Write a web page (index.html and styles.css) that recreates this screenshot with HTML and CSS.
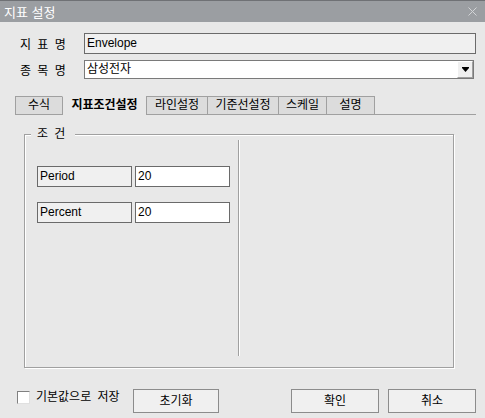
FILE: index.html
```html
<!DOCTYPE html>
<html lang="ko">
<head>
<meta charset="utf-8">
<title>지표 설정</title>
<link rel="stylesheet" href="styles.css">
</head>
<body>
<div class="window">
  <div class="titlebar">
    <span class="title">지표 설정</span>
    <svg class="close" width="9" height="9" viewBox="0 0 9 9"><path d="M0.5 0.5 L8.5 8.5 M8.5 0.5 L0.5 8.5" stroke="#d2d4d6" stroke-width="1" fill="none"/></svg>
  </div>
  <div class="main">
    <div class="row row-name">
      <span class="label">지 표 명</span>
      <div class="textbox">Envelope</div>
    </div>
    <div class="row row-item">
      <span class="label">종 목 명</span>
      <div class="combo">
        <span class="combo-text">삼성전자</span>
        <span class="combo-btn"><svg width="9" height="6" viewBox="0 0 9 6"><path d="M1 1 H8 L4.5 5 Z" fill="#000"/><rect x="1" y="0" width="7" height="1" fill="#000"/></svg></span>
      </div>
    </div>
    <div class="tabs">
      <div class="tab tab-1">수식</div>
      <div class="tab tab-2 active">지표조건설정</div>
      <div class="tab tab-3">라인설정</div>
      <div class="tab tab-4">기준선설정</div>
      <div class="tab tab-5">스케일</div>
      <div class="tab tab-6">설명</div>
    </div>
    <div class="group">
      <span class="legend">조 건</span>
      <div class="params">
        <div class="param">
          <div class="param-label">Period</div>
          <div class="param-input">20</div>
        </div>
        <div class="param">
          <div class="param-label">Percent</div>
          <div class="param-input">20</div>
        </div>
      </div>
      <div class="sep"></div>
    </div>
    <div class="footer">
      <div class="check">
        <span class="checkbox"></span>
        <span class="check-label">기본값으로 저장</span>
      </div>
      <div class="btn btn-reset">초기화</div>
      <div class="btn btn-ok">확인</div>
      <div class="btn btn-cancel">취소</div>
    </div>
  </div>
</div>
</body>
</html>
```
FILE: styles.css
```css
* { box-sizing: border-box; }
html, body { margin: 0; padding: 0; }
body {
  width: 485px;
  height: 418px;
  overflow: hidden;
  background: #e8e8e8;
  font-family: "Liberation Sans", "Noto Sans CJK KR", sans-serif;
  font-size: 12px;
  word-spacing: 3px;
  color: #000;
}
.window { width: 485px; height: 418px; }

.titlebar {
  height: 22px;
  background: #9b9ea2;
  border-top: 1px solid #6f7175;
  display: flex;
  align-items: center;
  justify-content: space-between;
  padding: 0 8px 0 4px;
  color: #fff;
  font-size: 13px;
  word-spacing: 0;
}
.close { display: block; }

.main { padding: 11px 9px 0 20px; }

.row { display: flex; align-items: center; }
.label { width: 64px; flex: none; }
.row-name { height: 21px; }
.textbox {
  flex: 1;
  height: 21px;
  border: 1px solid #6b6b6b;
  background: #f0f0f0;
  padding-left: 2px;
  line-height: 18px;
}
.row-item { height: 19px; margin-top: 6px; }
.combo {
  flex: 1;
  height: 19px;
  margin-right: 2px;
  border: 1px solid #7a7a7a;
  background: #fff;
  display: flex;
  align-items: center;
  justify-content: space-between;
  padding-left: 2px;
}
.combo-text { line-height: 17px; }
.combo-btn {
  width: 16px;
  height: 17px;
  background: #f0f0f0;
  border-top: 1px solid #fff;
  border-left: 1px solid #fff;
  border-right: 1px solid #a0a0a0;
  border-bottom: 1px solid #a0a0a0;
  display: flex;
  align-items: center;
  justify-content: center;
}
.combo-btn svg { display: block; }

.tabs {
  display: flex;
  margin: 17px 0 0 -5px;
  height: 19px;
  border-bottom: 1px solid #a0a0a0;
}
.tab {
  height: 18px;
  background: #dcdcdc;
  border-top: 1px solid #a0a0a0;
  border-left: 1px solid #a0a0a0;
  text-align: center;
  line-height: 16px;
}
.tab.active {
  background: #e8e8e8;
  border-top-color: #e8e8e8;
  height: 19px;
  margin-bottom: -1px;
  font-weight: bold;
  position: relative;
}
.tab-1 { width: 47px; }
.tab-2 { width: 84px; }
.tab-3 { width: 61px; }
.tab-4 { width: 71px; }
.tab-5 { width: 48px; }
.tab-6 { width: 49px; border-right: 1px solid #a0a0a0; }

.group {
  position: relative;
  margin: 19px 0 0 4px;
  width: 430px;
  height: 234px;
  border: 1px solid #a0a0a0;
  box-shadow: inset 1px 1px 0 #fff, 1px 1px 0 #fff;
  display: flex;
  padding: 5px 0 11px 12px;
}
.legend {
  position: absolute;
  top: -8px;
  left: 6px;
  width: 44px;
  padding-left: 6px;
  line-height: 14px;
  background: #e8e8e8;
}
.params { width: 193px; margin-right: 8px; padding-top: 26px; }
.param { display: flex; height: 21px; margin-bottom: 15px; }
.param-label {
  width: 95px;
  border: 1px solid #6a6a6a;
  background: #f0f0f0;
  padding-left: 2px;
  line-height: 18px;
}
.param-input {
  width: 95px;
  margin-left: 3px;
  border: 1px solid #6a6a6a;
  background: #fff;
  padding-left: 2px;
  line-height: 18px;
}
.sep {
  width: 2px;
  border-left: 1px solid #a0a0a0;
  border-right: 1px solid #fff;
}

.footer {
  display: flex;
  align-items: flex-start;
  margin: 21px 0 0 -3px;
  height: 24px;
}
.check {
  display: flex;
  align-items: center;
  width: 107px;
  height: 14px;
  margin-top: 1px;
  white-space: nowrap;
}
.checkbox {
  flex: none;
  width: 13px;
  height: 13px;
  background: #fff;
  border: 1px solid #808080;
  border-right-color: #e0e0e0;
  border-bottom-color: #e0e0e0;
}
.check-label { margin-left: 6px; line-height: 14px; }
.btn {
  width: 86px;
  height: 24px;
  border: 1px solid #8c8c8c;
  background: #f0f0f0;
  text-align: center;
  line-height: 22px;
}
.btn-reset { margin-left: 9px; }
.btn-ok { margin-left: auto; width: 88px; }
.btn-cancel { margin-left: 9px; width: 88px; }
```
